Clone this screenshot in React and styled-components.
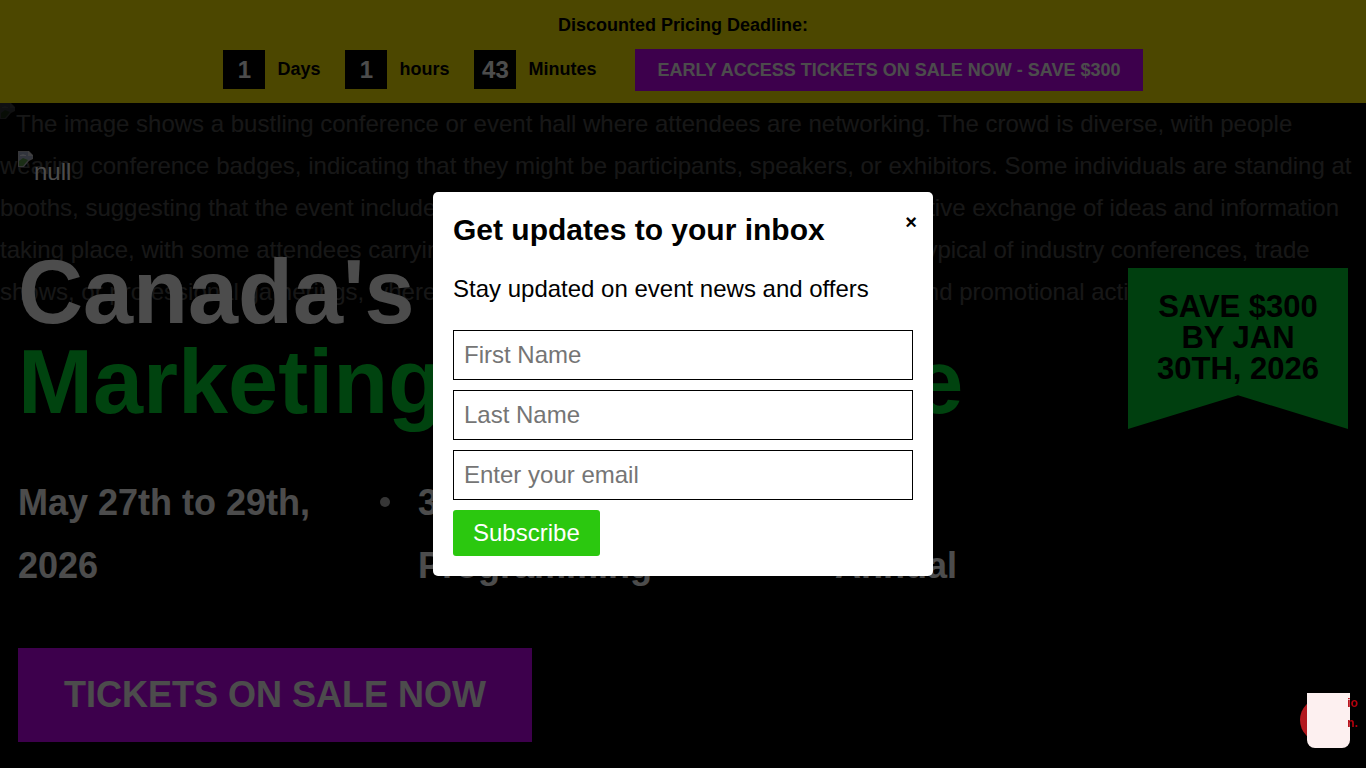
import { useState } from "react";
import styled, { createGlobalStyle } from "styled-components";

const countdown = [
    { value: "1", label: "Days" },
    { value: "1", label: "hours" },
    { value: "43", label: "Minutes" },
];

const highlights = ["May 27th to 29th, 2026", "3 Days of Programming", "16th Annual"];

const fields = [
    { id: "firstName", type: "text", label: "First Name" },
    { id: "lastName", type: "text", label: "Last Name" },
    { id: "email", type: "email", label: "Enter your email" },
];

const BrokenImage = () => (
    <BrokenIcon viewBox="0 0 16 16" aria-hidden="true">
        <path d="M0 0h11l4 4v4l-4 2-5 6H0z" fill="#b9b9be" />
        <path d="M1 1h9v4h4v2l-4 2-4 4H1z" fill="#a9b2cc" />
        <path d="M1 15V10l4-3 5 2-5 6z" fill="#5c9a4a" />
        <path d="M3 4c1-1 3-1 4 0h1v1H2V4z" fill="#e8ebf4" />
        <path d="M10 0v5h5z" fill="#d8d8dc" />
    </BrokenIcon>
)

const App = () => {

    const [open, setOpen] = useState(true);

    return (
        <>
            <GlobalStyle />
            <TopBar>
                <TopBarTitle>Discounted Pricing Deadline:</TopBarTitle>
                <TopBarRow>
                    <Countdown>
                        {countdown.map((item) => (
                            <CountdownItem key={item.label}>
                                <CountdownValue>{item.value}</CountdownValue>
                                {item.label}
                            </CountdownItem>
                        ))}
                    </Countdown>
                    <TopBarLink href="#tickets">EARLY ACCESS TICKETS ON SALE NOW - SAVE $300</TopBarLink>
                </TopBarRow>
            </TopBar>

            <Hero>
                <HeroBackground>
                    <BrokenImage />
                    The image shows a bustling conference or event hall where attendees are networking. The crowd is diverse, with people
                    wearing conference badges, indicating that they might be participants, speakers, or exhibitors. Some individuals are standing at
                    booths, suggesting that the event includes displays and stalls. There seems to be an active exchange of ideas and information
                    taking place, with some attendees carrying bags and handout materials. The setting is typical of industry conferences, trade
                    shows, or professional gatherings, where networking opportunities, many discussions and promotional activities
                </HeroBackground>
                <HeroContent>
                    <Logo href="#home">
                        <BrokenImage />
                        null
                    </Logo>
                    <HeroRow>
                        <HeroTitle>
                            Canada's
                            <span>Marketing Conference</span>
                        </HeroTitle>
                        <Badge>SAVE $300 BY JAN 30TH, 2026</Badge>
                    </HeroRow>
                    <Highlights>
                        {highlights.map((text) => (
                            <Highlight key={text}>
                                <HighlightText>{text}</HighlightText>
                            </Highlight>
                        ))}
                    </Highlights>
                    <HeroButton href="#tickets">TICKETS ON SALE NOW</HeroButton>
                </HeroContent>
            </Hero>

            {open && (
                <Overlay>
                    <Modal role="dialog" aria-labelledby="modal-title">
                        <CloseButton type="button" aria-label="Close" onClick={() => setOpen(false)}>×</CloseButton>
                        <ModalTitle id="modal-title">Get updates to your inbox</ModalTitle>
                        <ModalText>Stay updated on event news and offers</ModalText>
                        <Form onSubmit={(e) => e.preventDefault()}>
                            {fields.map((field) => (
                                <Input key={field.id} id={field.id} type={field.type} placeholder={field.label} aria-label={field.label} />
                            ))}
                            <SubmitButton type="submit">Subscribe</SubmitButton>
                        </Form>
                    </Modal>
                </Overlay>
            )}

            <Widget>
                <WidgetCircle />
                <WidgetPanel />
                <WidgetText>io<br />n.</WidgetText>
            </Widget>
        </>
    )
}

const GlobalStyle = createGlobalStyle`
* {
    box-sizing: border-box;
}
body {
    margin: 0;
    background-color: #000000;
    color: #ffffff;
    font-family: "Liberation Sans", Arial, sans-serif;
    font-size: 24px;
    line-height: 42px;
}
`;

const TopBar = styled.header`
display: flex;
flex-direction: column;
align-items: center;
gap: 8px;
padding: 9px 18px 12px;
background-color: #ffed00;
color: #000000;
font-size: 18px;
font-weight: 700;
`;

const TopBarTitle = styled.div`
line-height: 32px;
`;

const TopBarRow = styled.div`
display: flex;
align-items: center;
gap: 39px;
`;

const Countdown = styled.div`
display: flex;
gap: 25px;
padding-bottom: 1px;
`;

const CountdownItem = styled.div`
display: flex;
align-items: center;
gap: 12px;
line-height: 39px;
`;

const CountdownValue = styled.span`
width: 42px;
background-color: #000000;
color: #ffffff;
font-size: 24px;
text-align: center;
`;

const TopBarLink = styled.a`
padding: 0 22px;
background-color: #cc00ff;
color: #ffffff;
text-decoration: none;
`;

const Hero = styled.main`
position: relative;
overflow: hidden;
`;

const HeroBackground = styled.div`
position: absolute;
inset: 0;
opacity: 0.3;
`;

const BrokenIcon = styled.svg`
width: 16px;
height: 16px;
flex: none;
vertical-align: top;
`;

const HeroContent = styled.div`
position: relative;
display: flex;
flex-direction: column;
align-items: flex-start;
padding: 48px 18px 26px;
`;

const Logo = styled.a`
display: flex;
color: #ffffff;
text-decoration: none;
`;

const HeroRow = styled.div`
display: flex;
align-items: flex-start;
justify-content: space-between;
width: 100%;
margin-top: 54px;
`;

const HeroTitle = styled.h1`
margin: 0;
font-size: 90px;
line-height: 90px;

& span {
    display: block;
    color: #00df32;
}
`;

const Badge = styled.div`
width: 220px;
height: 161px;
margin-top: 21px;
padding: 23px 24px;
background-color: #00d232;
clip-path: polygon(0 0, 100% 0, 100% 100%, 50% 79%, 0 100%);
color: #000000;
font-size: 31px;
font-weight: 700;
line-height: 31px;
text-align: center;
`;

const Highlights = styled.ul`
display: grid;
grid-template-columns: 400fr 417fr 513fr;
width: 100%;
margin: 42px 0 51px;
padding: 0;
list-style: none;
font-size: 36px;
font-weight: 700;
line-height: 63px;
`;

const Highlight = styled.li`
display: flex;
justify-content: space-between;

&:not(:last-child)::after {
    content: "";
    width: 10px;
    height: 10px;
    margin: 26px 28px 0 0;
    border-radius: 50%;
    background-color: #b5b5b5;
}
&:last-child {
    max-width: 160px;
}
`;

const HighlightText = styled.span`
max-width: 300px;
`;

const HeroButton = styled.a`
width: 514px;
max-width: 100%;
background-color: #cc00ff;
color: #ffffff;
font-size: 36px;
font-weight: 700;
line-height: 94px;
text-align: center;
text-decoration: none;
`;

const Overlay = styled.div`
position: fixed;
inset: 0;
display: flex;
align-items: center;
justify-content: center;
background-color: rgba(0, 0, 0, 0.7);
`;

const Modal = styled.div`
position: relative;
width: 500px;
max-width: 100%;
padding: 20px;
border-radius: 5px;
background-color: #ffffff;
color: #000000;
`;

const CloseButton = styled.button`
position: absolute;
top: 20px;
right: 16px;
padding: 0;
border: none;
background: none;
color: #000000;
font-family: inherit;
font-size: 20px;
font-weight: 700;
line-height: 20px;
cursor: pointer;
`;

const ModalTitle = styled.h2`
margin: 0 0 20px;
font-size: 30px;
line-height: 36px;
`;

const ModalText = styled.p`
margin: 0 0 20px;
`;

const Form = styled.form`
display: flex;
flex-direction: column;
align-items: flex-start;
gap: 10px;
`;

const Input = styled.input`
width: 100%;
padding: 10px;
border: 1px solid #000000;
font-family: inherit;
font-size: 24px;

&::placeholder {
    color: #757575;
}
`;

const SubmitButton = styled.button`
height: 46px;
padding: 0 20px;
border: none;
border-radius: 3px;
background-color: #2bc80f;
color: #ffffff;
font-family: inherit;
font-size: 24px;
cursor: pointer;
`;

const Widget = styled.div`
position: fixed;
right: 8px;
bottom: 20px;
width: 58px;
height: 55px;
`;

const WidgetCircle = styled.div`
position: absolute;
top: 5px;
left: 0;
width: 44px;
height: 44px;
border-radius: 50%;
background-color: #b3191f;
`;

const WidgetPanel = styled.div`
position: absolute;
inset: 0 8px 0 7px;
border-radius: 0 0 8px 8px;
background-color: #fdf0f0;
`;

const WidgetText = styled.div`
position: absolute;
top: 0;
right: 0;
color: #b3000c;
font-size: 12px;
font-weight: 700;
line-height: 20px;
`;

export default App;
